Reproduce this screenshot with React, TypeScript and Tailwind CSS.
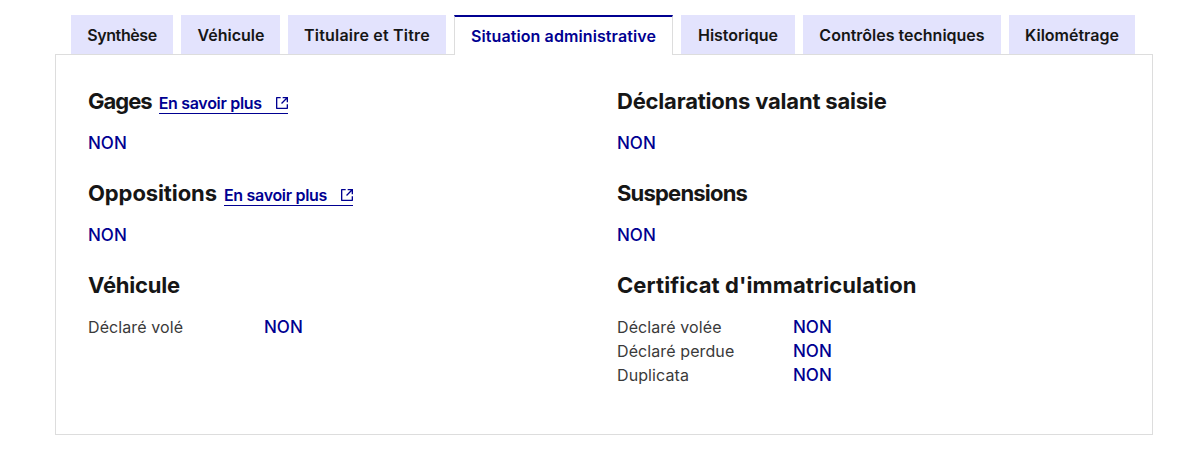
const tabs = [
  { label: 'Synthèse', width: 'w-[102px]', tracking: 'tracking-[-0.4px]' },
  { label: 'Véhicule', width: 'w-[99px]', tracking: 'tracking-normal pl-[1px]' },
  { label: 'Titulaire et Titre', width: 'w-[158px]', tracking: 'tracking-[0.2px]' },
  { label: 'Situation administrative', width: 'w-[219px]', tracking: 'tracking-[0.1px]', active: true },
  { label: 'Historique', width: 'w-[114px]', tracking: 'tracking-normal' },
  { label: 'Contrôles techniques', width: 'w-[198px]', tracking: 'tracking-normal' },
  { label: 'Kilométrage', width: 'w-[126px]', tracking: 'tracking-normal' },
];

const ExternalIcon = () => (
  <svg width="16" height="16" viewBox="0 0 24 24" fill="currentColor" className="ml-[12px] -mr-[2px]">
    <path d="M10 3v2H5v14h14v-5h2v6a1 1 0 0 1-1 1H4a1 1 0 0 1-1-1V4a1 1 0 0 1 1-1h6Zm7.59 2H13V3h8v8h-2V6.41l-7 7L10.59 12l7-7Z" />
  </svg>
);

const Heading = ({ title, link, tracking = 'tracking-normal' }: { title: string; link?: boolean; tracking?: string }) => (
  <div className="flex items-center h-7">
    <h3 className={`text-[22px] leading-7 font-bold text-[#161616] ${tracking}`}>{title}</h3>
    {link && (
      <a className="ml-[7px] mt-[3px] flex items-center h-[22px] pt-[2px] border-b border-[#000091] text-base leading-5 font-semibold tracking-[-0.3px] text-[#000091]">
        En savoir plus
        <ExternalIcon />
      </a>
    )}
  </div>
);

const Non = () => <p className="mt-4 mb-6 text-[17px] leading-6 font-medium text-[#000091]">NON</p>;

const Row = ({ label }: { label: string }) => (
  <div className="flex text-base leading-6">
    <span className="w-[176px] tracking-[0.1px] text-[#3a3a3a]">{label}</span>
    <span className="text-[17px] font-medium text-[#000091]">NON</span>
  </div>
);

export default function App() {
  return (
    <div className="h-[459px] bg-white pt-[15px] pl-[55px] font-['Inter',sans-serif]">
      <div className="flex gap-2 pl-4 h-[39px] relative z-10">
        {tabs.map((t) =>
          t.active ? (
            <div
              key={t.label}
              className={`${t.width} ${t.tracking} h-10 flex items-center justify-center bg-white border-x border-[#ddd] border-t-2 border-t-[#000091] text-base font-semibold text-[#000091]`}
            >
              {t.label}
            </div>
          ) : (
            <div
              key={t.label}
              className={`${t.width} ${t.tracking} pt-[1px] flex items-center justify-center bg-[#e3e3fd] text-base font-semibold text-[#161616]`}
            >
              {t.label}
            </div>
          ),
        )}
      </div>
      <div className="w-[1098px] h-[381px] border border-[#ddd] pt-8 pl-8 flex">
        <div className="w-[529px]">
          <Heading title="Gages" link tracking="tracking-[-1px]" />
          <Non />
          <Heading title="Oppositions" link tracking="tracking-[-0.1px]" />
          <Non />
          <Heading title="Véhicule" tracking="tracking-[-0.2px]" />
          <div className="mt-4">
            <Row label="Déclaré volé" />
          </div>
        </div>
        <div>
          <Heading title="Déclarations valant saisie" tracking="tracking-[-0.2px]" />
          <Non />
          <Heading title="Suspensions" tracking="tracking-[-0.8px]" />
          <Non />
          <Heading title="Certificat d'immatriculation" tracking="tracking-[0.1px]" />
          <div className="mt-4">
            <Row label="Déclaré volée" />
            <Row label="Déclaré perdue" />
            <Row label="Duplicata" />
          </div>
        </div>
      </div>
    </div>
  );
}
